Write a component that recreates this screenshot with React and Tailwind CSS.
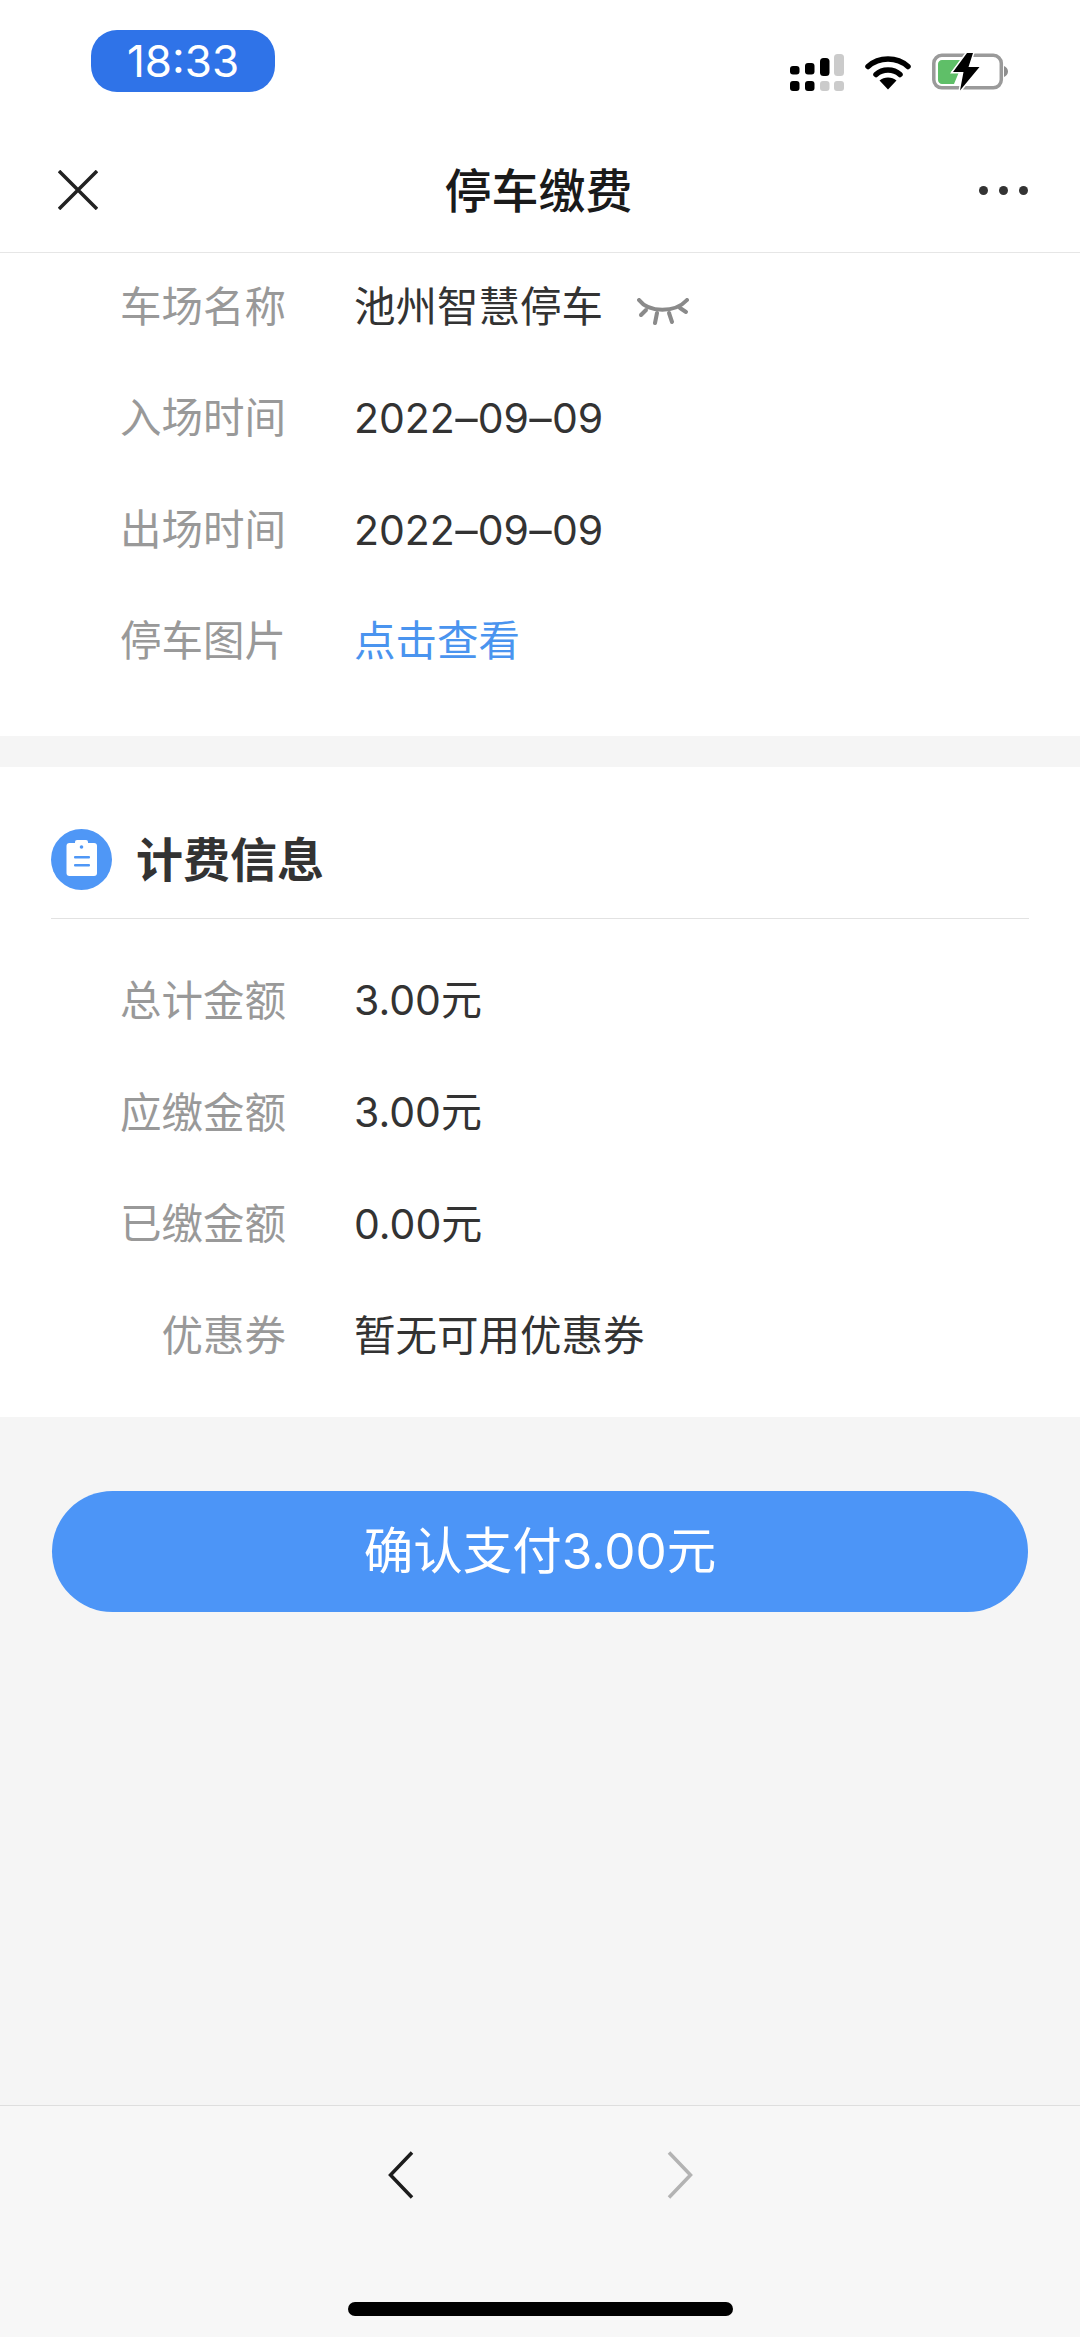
import React from 'react';

const parkingRows = [
  { label: '车场名称', value: '池州智慧停车', masked: true },
  { label: '入场时间', date: ['2022', '09', '09'] },
  { label: '出场时间', date: ['2022', '09', '09'] },
  { label: '停车图片', value: '点击查看', link: true },
];

const feeRows = [
  { label: '总计金额', value: '3.00元', numeric: true },
  { label: '应缴金额', value: '3.00元', numeric: true },
  { label: '已缴金额', value: '0.00元', numeric: true },
  { label: '优惠券', value: '暂无可用优惠券' },
];

const SignalIcon = () => (
  <svg width="54" height="37" viewBox="0 0 54 37" className="mr-[21px]">
    <rect x="0" y="12" width="9.5" height="8.5" rx="3" fill="#000" />
    <rect x="15" y="9" width="9.5" height="11.5" rx="3" fill="#000" />
    <rect x="30" y="4" width="9.5" height="18" rx="3.5" fill="#000" />
    <rect x="44" y="0" width="10" height="22" rx="3.5" fill="#cbcbcb" />
    <rect x="0" y="27" width="9.5" height="10" rx="3" fill="#000" />
    <rect x="15" y="27" width="9.5" height="10" rx="3" fill="#000" />
    <rect x="30" y="27" width="9.5" height="10" rx="3" fill="#cbcbcb" />
    <rect x="44" y="27" width="10" height="10" rx="3" fill="#cbcbcb" />
  </svg>
);

const WifiIcon = () => (
  <svg width="46" height="35" viewBox="0 0 46 35" className="mr-[21px]">
    <path d="M3 11.5C14 1.5 32 1.5 43 11.5" fill="none" stroke="#000" strokeWidth="5.5" strokeLinecap="round" />
    <path d="M11 19.5C17.5 13.5 28.5 13.5 35 19.5" fill="none" stroke="#000" strokeWidth="5.5" strokeLinecap="round" />
    <path d="M23 34.5L14.5 25.5C19 21.5 27 21.5 31.5 25.5Z" fill="#000" />
  </svg>
);

const BatteryIcon = () => (
  <svg width="77" height="38" viewBox="0 0 77 38" className="overflow-visible">
    <rect x="1.8" y="2.3" width="67.5" height="32.5" rx="8" fill="none" stroke="#9a9a9a" strokeWidth="3.5" />
    <path d="M10 7H29L19 19L27 19L22 31H10C7.8 31 6 29.2 6 27V11C6 8.8 7.8 7 10 7Z" fill="#5fbf68" />
    <path d="M72 13C74.5 14 76 16 76 18.5C76 21 74.5 23 72 24Z" fill="#8e8e8e" />
    <path
      d="M35 0L21 19H31.5L28 37.5L47.5 14H36.5L41 0Z"
      fill="#000"
      stroke="#fff"
      strokeWidth="3"
      paintOrder="stroke"
    />
  </svg>
);

const EyeClosedIcon = () => (
  <svg width="52" height="27" viewBox="0 0 52 27" className="ml-[34px] mt-[10px]">
    <g fill="none" stroke="#8a8a8a" strokeWidth="4" strokeLinecap="round">
      <path d="M2 2C12 15 38 15 50 2" />
      <path d="M9 12L4 17" />
      <path d="M20 15L18 25" />
      <path d="M32 15L35 24" />
      <path d="M43 10L49 14" />
    </g>
  </svg>
);

const ClipboardBadge = () => (
  <svg width="61" height="61" viewBox="0 0 61 61" className="shrink-0">
    <circle cx="30.5" cy="30.5" r="30.5" fill="#4f97f6" />
    <rect x="15.5" y="14" width="30.5" height="33" rx="3" fill="#fff" />
    <rect x="24" y="11" width="13" height="6" rx="2" fill="#fff" />
    <circle cx="30.5" cy="18" r="1.8" fill="#4f97f6" />
    <rect x="23" y="27" width="16" height="2.5" rx="1" fill="#4f97f6" />
    <rect x="23" y="35" width="16" height="2.5" rx="1" fill="#4f97f6" />
  </svg>
);

// the hyphen in the screenshot's font is much wider than Inter's
const DateValue = ({ parts }) => (
  <span className="text-[41px]">
    {parts[0]}
    <span className="mx-[2px] inline-block scale-x-[1.7]">-</span>
    {parts[1]}
    <span className="mx-[2px] inline-block scale-x-[1.7]">-</span>
    {parts[2]}
  </span>
);

const InfoRow = ({ label, value, date, link, masked, numeric }) => (
  <div className="flex h-[111.6px] items-center">
    <div className="w-[286px] shrink-0 text-right text-[#999999]">{label}</div>
    <div className={`ml-[68px] ${link ? 'text-[#4a94ef]' : 'text-[#333333]'} ${numeric ? 'text-[41px]' : ''}`}>
      {date ? <DateValue parts={date} /> : value}
    </div>
    {masked && <EyeClosedIcon />}
  </div>
);

export default function App() {
  return (
    <div
      className="flex h-[2337px] w-[1080px] flex-col overflow-hidden bg-[#f5f5f5]"
      style={{ fontFamily: 'Inter, "Noto Sans CJK SC", sans-serif' }}
    >
      <div className="relative z-10 bg-white">
        <div className="flex h-[128px] items-start justify-between pt-[30px] pl-[91px] pr-[71px]">
          <div className="flex h-[62px] w-[184px] items-center justify-center rounded-[26px] bg-[#2f73e8] text-[44px] text-white">
            18:33
          </div>
          <div className="mt-[23px] flex items-center">
            <SignalIcon />
            <WifiIcon />
            <BatteryIcon />
          </div>
        </div>
        <div className="flex h-[125px] items-center justify-between border-b border-[#e6e6e6] pl-[58px] pr-[52px]">
          <svg width="40" height="40" viewBox="0 0 40 40">
            <path d="M1 1L39 39M39 1L1 39" fill="none" stroke="#222222" strokeWidth="3.5" />
          </svg>
          <div className="text-[47px] font-medium leading-none text-[#1a1a1a]">停车缴费</div>
          <div className="flex w-[49px] justify-between">
            <span className="h-[9px] w-[9px] rounded-full bg-[#333333]" />
            <span className="h-[9px] w-[9px] rounded-full bg-[#333333]" />
            <span className="h-[9px] w-[9px] rounded-full bg-[#333333]" />
          </div>
        </div>
      </div>

      <section className="-mt-[2px] bg-white pb-[39px] text-[41.5px]">
        {parkingRows.map((row) => (
          <InfoRow key={row.label} {...row} />
        ))}
      </section>

      <section className="mt-[31px] bg-white pb-[25px] text-[41.5px]">
        <div className="mx-[51px] mb-[26px] flex h-[152px] items-center gap-[24px] border-b border-[#e2e2e2] pt-[34px]">
          <ClipboardBadge />
          <div className="text-[47px] font-bold leading-none text-[#333333]">计费信息</div>
        </div>
        {feeRows.map((row) => (
          <InfoRow key={row.label} {...row} />
        ))}
      </section>

      <div className="mx-[52px] mt-[74px] flex h-[121px] items-center justify-center rounded-full bg-[#4c95f7] text-[49.5px] text-white">
        确认支付3.00元
      </div>

      <div className="mt-auto flex h-[232px] flex-col items-center border-t border-[#dedede] bg-[#f7f7f7]">
        <div className="mt-[45px] flex w-[305px] justify-between">
          <svg width="26" height="48" viewBox="0 0 26 48">
            <path d="M24 1.5L2.5 24L24 46.5" fill="none" stroke="#1c1c1c" strokeWidth="3.5" />
          </svg>
          <svg width="26" height="48" viewBox="0 0 26 48">
            <path d="M2 1.5L23.5 24L2 46.5" fill="none" stroke="#b3b3b3" strokeWidth="3.5" />
          </svg>
        </div>
        <div className="mt-[103px] h-[14px] w-[385px] rounded-full bg-black" />
      </div>
    </div>
  );
}
